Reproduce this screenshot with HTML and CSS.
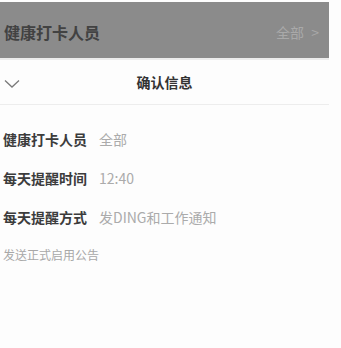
FILE: index.html
```html
<!DOCTYPE html>
<html lang="zh">

<head>
    <meta charset="utf-8">
    <meta name="viewport" content="width=device-width, initial-scale=1.0">
    <title>确认信息</title>

    <link rel="stylesheet" href="styles.css">
</head>

<body>

    <div class="mask">
        <span class="maskTitle">健康打卡人员</span>
        <span class="maskValue">全部 <span class="arrow">&gt;</span></span>
    </div>

    <header class="kopf">
        <svg class="pil" width="16" height="10" viewBox="0 0 16 10">
            <path d="M1 1.5 L8 8 L15 1.5" fill="none" stroke="#7a7a7a" stroke-width="1.3"/>
        </svg>
        <h1>确认信息</h1>
    </header>

    <main class="info">
        <p class="linje"><span class="navn">健康打卡人员</span><span class="vaerdi">全部</span></p>
        <p class="linje"><span class="navn">每天提醒时间</span><span class="vaerdi">12:40</span></p>
        <p class="linje"><span class="navn">每天提醒方式</span><span class="vaerdi">发DING和工作通知</span></p>
        <p class="note">发送正式启用公告</p>
    </main>

</body>

</html>
```

FILE: styles.css
```css
body {
    margin: 0;
    background-color: #fdfdfd;
    font-family: "Noto Sans CJK SC", "Noto Sans", sans-serif;
}

.mask {
    width: 329px;
    height: 58px;
    margin-top: 2px;
    background-color: #8b8b8b;
    display: flex;
    align-items: center;
    justify-content: space-between;
    padding: 4px 10px 0 4px;
    box-sizing: border-box;
    border-bottom: 2px solid #ececec;
}

.maskTitle {
    font-size: 16px;
    font-weight: bold;
    color: #424242;
}

.maskValue {
    font-size: 14px;
    color: #a9a9a9;
}

.arrow {
    margin-left: 4px;
}

.kopf {
    width: 329px;
    height: 44px;
    position: relative;
    display: flex;
    align-items: center;
    justify-content: center;
    border-bottom: 1px solid #ededed;
}

.pil {
    position: absolute;
    left: 4px;
    top: 19px;
}

h1 {
    margin: 0;
    font-size: 14px;
    font-weight: bold;
    color: #333;
}

.info {
    padding: 24px 3px 0 3px;
}

.linje {
    margin: 0 0 19px 0;
    height: 20px;
    line-height: 20px;
    font-size: 14px;
}

.navn {
    color: #3c3c3c;
    font-weight: bold;
}

.vaerdi {
    color: #ababab;
    margin-left: 12px;
}

.note {
    margin: 1px 0 0 0;
    font-size: 12px;
    color: #a8a8a8;
}
```
